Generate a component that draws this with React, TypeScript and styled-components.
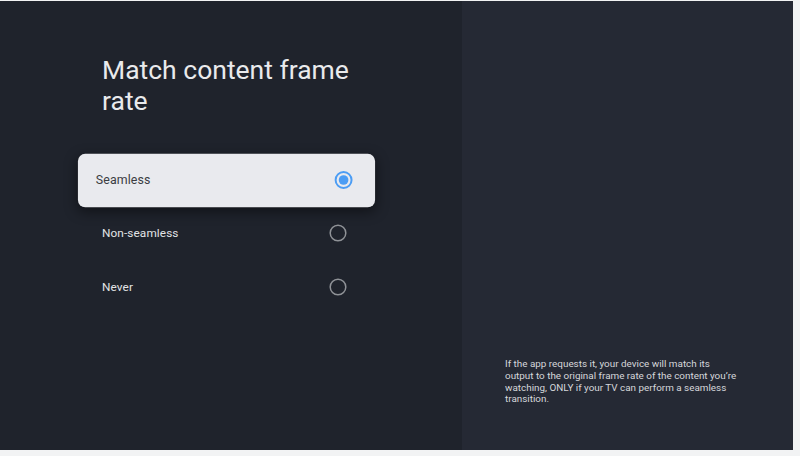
import React from "react";
import styled, { createGlobalStyle, css } from "styled-components";

const Global = createGlobalStyle`
  html, body { margin: 0; padding: 0; background: #f2f3f4; }
  body { font-family: Roboto, "Noto Sans", Arial, sans-serif; -webkit-font-smoothing: antialiased; }
`;

const Screen = styled.div`
  margin-top: 1px;
  width: 793px;
  height: 449px;
  display: flex;
  overflow: hidden;
`;

const LeftPane = styled.div`
  width: 462px;
  flex: none;
  background: #1f232c;
  padding: 52.5px 0 0 0;
  box-sizing: border-box;
  display: flex;
  flex-direction: column;
`;

const RightPane = styled.div`
  flex: 1;
  background: #252934;
  display: flex;
  flex-direction: column;
  justify-content: flex-end;
  padding: 0 40px 45px 43px;
`;

const Title = styled.h1`
  margin: 0 0 39px 102px;
  width: 270px;
  font-family: Roboto, sans-serif;
  font-weight: 400;
  font-size: 26.5px;
  line-height: 31px;
  color: #e9eaec;
`;

const List = styled.div`
  display: flex;
  flex-direction: column;
  gap: 3px;
  margin-left: 85px;
  width: 283px;
`;

const Row = styled.div<{ $focused?: boolean }>`
  height: 50.5px;
  display: flex;
  align-items: center;
  justify-content: space-between;
  padding: 0 21px 0 17px;
  border-radius: 7px;
  font-size: 11.8px;
  color: #e2e3e6;
  ${(p) =>
    p.$focused &&
    css`
      background: #e9eaee;
      color: #3b3d42;
      transform: scale(1.05);
      box-shadow: 0 4px 12px rgba(0, 0, 0, 0.45);
    `}
`;

const Label = styled.span`
  letter-spacing: 0.1px;
`;

const Description = styled.p`
  margin: 0;
  font-size: 9.9px;
  line-height: 11.7px;
  color: #d5d7db;
  max-width: 234px;
`;

function Radio({ checked }: { checked?: boolean }) {
  return (
    <svg width="18" height="18" viewBox="0 0 18 18">
      {checked ? (
        <>
          <circle cx="9" cy="9" r="7.6" fill="none" stroke="#4c9df4" strokeWidth="1.9" />
          <circle cx="9" cy="9" r="4.6" fill="#4c9df4" />
        </>
      ) : (
        <circle cx="9" cy="9" r="7.8" fill="none" stroke="#8f9297" strokeWidth="1.5" />
      )}
    </svg>
  );
}

const options = ["Seamless", "Non-seamless", "Never"];

export default function App() {
  return (
    <>
      <Global />
      <Screen>
        <LeftPane>
          <Title>Match content frame rate</Title>
          <List>
            {options.map((o, i) => (
              <Row key={o} $focused={i === 0}>
                <Label>{o}</Label>
                <Radio checked={i === 0} />
              </Row>
            ))}
          </List>
        </LeftPane>
        <RightPane>
          <Description>
            If the app requests it, your device will match its output to the original frame rate of the
            content you’re watching, ONLY if your TV can perform a seamless transition.
          </Description>
        </RightPane>
      </Screen>
    </>
  );
}
